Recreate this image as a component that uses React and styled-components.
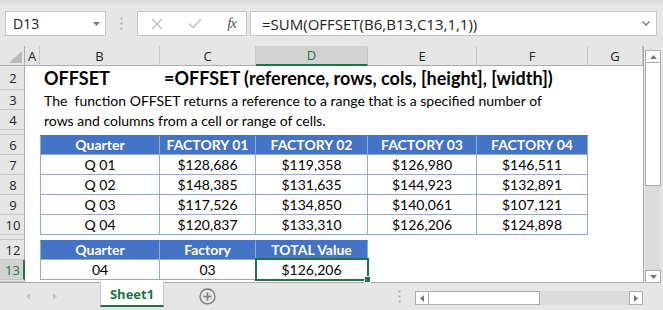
import React from 'react'
import styled, { createGlobalStyle, css } from 'styled-components'

const GlobalStyle = createGlobalStyle`
  html, body { margin: 0; padding: 0; background: #e6e6e6; }
  * { box-sizing: border-box; }
`

const UI_FONT = `"Open Sans", "Noto Sans", sans-serif`
const CELL_FONT = `Lato, "Open Sans", sans-serif`
const GREEN = '#217346'
const BLUE = '#4472c4'
const LINE = '#8eaadb'

const Window = styled.div`
  width: 663px;
  height: 310px;
  display: flex;
  flex-direction: column;
  background: #e6e6e6;
  overflow: hidden;
`

/* ---------- formula bar ---------- */
const FormulaBar = styled.div`
  height: 46px;
  display: flex;
  align-items: flex-start;
  padding: 11px 6px 0 5px;
  background: linear-gradient(#d9d9d9 0px, #e6e6e6 6px);
  font-family: ${UI_FONT};
`
const Box = styled.div`
  height: 25px;
  background: #fff;
  border: 1px solid #c6c6c6;
  display: flex;
  align-items: center;
`
const NameBox = styled(Box)`
  width: 101px;
  padding: 0 5px 0 7px;
  justify-content: space-between;
  font-size: 14px;
  color: #222;
`
const Grip = styled.div`
  width: 31px;
  height: 25px;
  display: flex;
  align-items: center;
  justify-content: center;
`
const FxBox = styled(Box)`
  width: 110px;
  padding: 0 10px 0 13px;
  justify-content: space-between;
`
const Fx = styled.span`
  font-family: "Liberation Serif", serif;
  font-style: italic;
  font-size: 15px;
  color: #555;
  letter-spacing: -1px;
`
const FormulaInput = styled(Box)`
  flex: 1;
  margin-left: 3px;
  padding: 0 6px 0 11px;
  justify-content: space-between;
  font-size: 15px;
  color: #222;
`

/* ---------- sheet ---------- */
const SheetArea = styled.div`
  display: flex;
  height: 237px;
`
const Grid = styled.div`
  width: 644px;
  display: grid;
  grid-template-columns: 25px 15px 120px 96px 112px 109px 111px 1fr;
  grid-template-rows: 20px 24px 20px 20px 5px 20px 20px 20px 20px 20px 5px 20px 20px 1fr;
  background: #fff;
  border-right: 1px solid #ababab;
  border-bottom: 1px solid #ababab;
`
const Corner = styled.div`
  background: #e6e6e6;
  border-right: 1px solid #ababab;
  border-bottom: 1px solid #ababab;
  display: flex;
  align-items: flex-end;
  justify-content: flex-end;
  padding: 0 2px 2px 0;
`
const ColHead = styled.div`
  background: ${p => (p.$sel ? '#d2d2d2' : '#e6e6e6')};
  border-right: 1px solid #c6c6c6;
  border-bottom: ${p => (p.$sel ? `2px solid ${GREEN}` : '1px solid #ababab')};
  color: ${p => (p.$sel ? GREEN : '#222')};
  font-family: ${UI_FONT};
  font-size: 13px;
  display: flex;
  align-items: center;
  justify-content: center;
`
const RowHead = styled.div`
  background: ${p => (p.$sel ? '#d2d2d2' : '#e6e6e6')};
  border-right: ${p => (p.$sel ? `2px solid ${GREEN}` : '1px solid #ababab')};
  border-bottom: 1px solid #c6c6c6;
  color: ${p => (p.$sel ? GREEN : '#222')};
  font-family: ${UI_FONT};
  font-size: 13px;
  display: flex;
  align-items: center;
  justify-content: center;
  padding-left: 2px;
  overflow: hidden;
`
const Cell = styled.div`
  grid-column: span ${p => p.$span || 1};
  display: flex;
  align-items: flex-end;
  font-family: ${CELL_FONT};
  font-size: 14px;
  color: #000;
  white-space: pre;
  overflow: visible;
`
const TitleCell = styled(Cell)`
  font-weight: 700;
  font-size: 18px;
  padding: 0 0 1px 4px;
`
const TextCell = styled(Cell)`
  padding: 0 0 1px 4px;
`
const TCell = styled(Cell)`
  position: relative;
  justify-content: center;
  padding-bottom: 1px;
  border-right: 1px solid ${LINE};
  border-bottom: 1px solid ${LINE};
  ${p => p.$first && css`border-left: 1px solid ${LINE};`}
  ${p => p.$head && css`
    background: ${BLUE};
    color: #fff;
    font-weight: 700;
    border-top: 1px solid ${BLUE};
  `}
`
const Gap = styled.div`
  grid-column: span ${p => p.$span || 1};
`
const Selection = styled.div`
  position: absolute;
  left: -1px;
  top: -2px;
  right: -2px;
  bottom: -2px;
  border: 2px solid ${GREEN};
  pointer-events: none;
`
const Handle = styled.div`
  position: absolute;
  right: -4px;
  bottom: -4px;
  width: 5px;
  height: 5px;
  background: ${GREEN};
  border: 1px solid #fff;
  box-sizing: content-box;
`

/* ---------- scrollbars ---------- */
const VScroll = styled.div`
  width: 16px;
  margin: 4px 0 0 1px;
  display: flex;
  flex-direction: column;
  background: #dcdcdc;
`
const ScrollBtn = styled.div`
  width: ${p => (p.$h ? '14px' : '16px')};
  height: ${p => (p.$h ? '14px' : '13px')};
  background: #fff;
  border: 1px solid #ababab;
  display: flex;
  align-items: center;
  justify-content: center;
  flex-shrink: 0;
`
const VThumb = styled.div`
  height: 123px;
  background: #fff;
  border: 1px solid #ababab;
  border-top: none;
`
const Track = styled.div`
  flex: 1;
`

/* ---------- bottom tab bar ---------- */
const TabBar = styled.div`
  flex: 1;
  display: flex;
  align-items: flex-start;
  font-family: ${UI_FONT};
`
const Nav = styled.div`
  width: 100px;
  height: 27px;
  display: flex;
  align-items: center;
  padding-left: 26px;
  gap: 23px;
`
const Tab = styled.div`
  width: 64px;
  height: 25px;
  background: #fff;
  border-left: 1px solid #c6c6c6;
  border-right: 1px solid #c6c6c6;
  border-bottom: 2px solid ${GREEN};
  color: ${GREEN};
  font-weight: 700;
  font-size: 13px;
  display: flex;
  align-items: center;
  justify-content: center;
  margin-top: -1px;
`
const AddSheet = styled.div`
  width: 86px;
  height: 27px;
  display: flex;
  align-items: center;
  justify-content: center;
`
const Split = styled.div`
  width: 165px;
  height: 27px;
  display: flex;
  align-items: center;
  justify-content: flex-end;
  padding-right: 14px;
`
const HScroll = styled.div`
  width: 228px;
  height: 14px;
  margin-top: 8px;
  display: flex;
  background: #dcdcdc;
`
const HThumb = styled.div`
  width: 111px;
  background: #fff;
  border: 1px solid #ababab;
  border-left: none;
`

const Tri = ({ dir, color = '#777', size = 7 }) => {
  const pts = {
    down: '0,0 7,0 3.5,4',
    up: '0,4 7,4 3.5,0',
    left: '4,0 4,7 0,3.5',
    right: '0,0 0,7 4,3.5',
  }[dir]
  const vertical = dir === 'up' || dir === 'down'
  return (
    <svg width={vertical ? size : 4} height={vertical ? 4 : size} viewBox={vertical ? '0 0 7 4' : '0 0 4 7'}>
      <polygon points={pts} fill={color} />
    </svg>
  )
}

const Dots = () => (
  <svg width="3" height="13" viewBox="0 0 3 13">
    <rect x="0.5" y="0.5" width="2" height="2" fill="#adadad" />
    <rect x="0.5" y="5.5" width="2" height="2" fill="#adadad" />
    <rect x="0.5" y="10.5" width="2" height="2" fill="#adadad" />
  </svg>
)

const factories = [
  ['Q 01', '$128,686', '$119,358', '$126,980', '$146,511'],
  ['Q 02', '$148,385', '$131,635', '$144,923', '$132,891'],
  ['Q 03', '$117,526', '$134,850', '$140,061', '$107,121'],
  ['Q 04', '$120,837', '$133,310', '$126,206', '$124,898'],
]

export default function App() {
  return (
    <Window>
      <GlobalStyle />
      <FormulaBar>
        <NameBox>
          <span>D13</span>
          <Tri dir="down" />
        </NameBox>
        <Grip><Dots /></Grip>
        <FxBox>
          <svg width="12" height="12" viewBox="0 0 12 12">
            <path d="M1 1 L11 11 M11 1 L1 11" stroke="#bdbdbd" strokeWidth="1.4" />
          </svg>
          <svg width="14" height="11" viewBox="0 0 14 11">
            <path d="M1 5.5 L5 9.5 L13 1" stroke="#bdbdbd" strokeWidth="1.5" fill="none" />
          </svg>
          <Fx>fx</Fx>
        </FxBox>
        <FormulaInput>
          <span>=SUM(OFFSET(B6,B13,C13,1,1))</span>
          <svg width="8" height="5" viewBox="0 0 8 5">
            <path d="M0.5 0.5 L4 4 L7.5 0.5" stroke="#777" strokeWidth="1.4" fill="none" />
          </svg>
        </FormulaInput>
      </FormulaBar>

      <SheetArea>
        <Grid>
          <Corner>
            <svg width="13" height="12" viewBox="0 0 13 12">
              <polygon points="13,0 13,12 0,12" fill="#b9b9b9" />
            </svg>
          </Corner>
          <ColHead>A</ColHead>
          <ColHead>B</ColHead>
          <ColHead>C</ColHead>
          <ColHead $sel>D</ColHead>
          <ColHead>E</ColHead>
          <ColHead>F</ColHead>
          <ColHead>G</ColHead>

          <RowHead>2</RowHead>
          <Gap />
          <TitleCell>OFFSET</TitleCell>
          <TitleCell $span={5}>=OFFSET (reference, rows, cols, [height], [width])</TitleCell>

          <RowHead>3</RowHead>
          <Gap />
          <TextCell $span={6}>The  function OFFSET returns a reference to a range that is a specified number of</TextCell>

          <RowHead>4</RowHead>
          <Gap />
          <TextCell $span={6}>rows and columns from a cell or range of cells.</TextCell>

          <RowHead />
          <Gap $span={7} />

          <RowHead>6</RowHead>
          <Gap />
          <TCell $head $first>Quarter</TCell>
          <TCell $head>FACTORY 01</TCell>
          <TCell $head>FACTORY 02</TCell>
          <TCell $head>FACTORY 03</TCell>
          <TCell $head>FACTORY 04</TCell>
          <Gap />

          {factories.map((row, i) => (
            <React.Fragment key={row[0]}>
              <RowHead>{i + 7}</RowHead>
              <Gap />
              {row.map((v, j) => (
                <TCell key={j} $first={j === 0}>{v}</TCell>
              ))}
              <Gap />
            </React.Fragment>
          ))}

          <RowHead />
          <Gap $span={7} />

          <RowHead>12</RowHead>
          <Gap />
          <TCell $head $first>Quarter</TCell>
          <TCell $head>Factory</TCell>
          <TCell $head>TOTAL Value</TCell>
          <Gap $span={3} />

          <RowHead $sel>13</RowHead>
          <Gap />
          <TCell $first>04</TCell>
          <TCell>03</TCell>
          <TCell>
            $126,206
            <Selection><Handle /></Selection>
          </TCell>
          <Gap $span={3} />

          <RowHead />
        </Grid>
        <VScroll>
          <ScrollBtn><Tri dir="up" /></ScrollBtn>
          <VThumb />
          <Track />
          <ScrollBtn><Tri dir="down" /></ScrollBtn>
        </VScroll>
      </SheetArea>

      <TabBar>
        <Nav>
          <Tri dir="left" color="#c4c4c4" />
          <Tri dir="right" color="#c4c4c4" />
        </Nav>
        <Tab>Sheet1</Tab>
        <AddSheet>
          <svg width="17" height="17" viewBox="0 0 17 17">
            <circle cx="8.5" cy="8.5" r="7.5" stroke="#7a7a7a" strokeWidth="1.3" fill="none" />
            <path d="M8.5 4.5 V12.5 M4.5 8.5 H12.5" stroke="#7a7a7a" strokeWidth="1.6" />
          </svg>
        </AddSheet>
        <Split><Dots /></Split>
        <HScroll>
          <ScrollBtn $h><Tri dir="left" /></ScrollBtn>
          <HThumb />
          <Track />
          <ScrollBtn $h><Tri dir="right" /></ScrollBtn>
        </HScroll>
      </TabBar>
    </Window>
  )
}
